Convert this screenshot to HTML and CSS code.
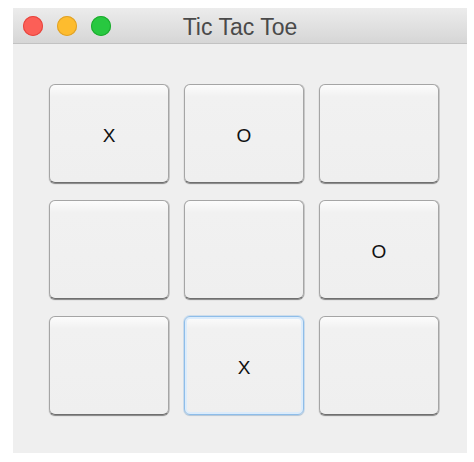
FILE: index.html
```html
<!DOCTYPE html>
<html>
<head>
<meta charset="utf-8">
<link rel="stylesheet" href="styles.css">
</head>
<body>
<div class="window">
  <div class="titlebar">
    <div class="lights">
      <span class="light red"></span>
      <span class="light yellow"></span>
      <span class="light green"></span>
    </div>
    <div class="title">Tic Tac Toe</div>
  </div>
  <div class="content">
    <div class="board">
      <button class="cell">X</button>
      <button class="cell">O</button>
      <button class="cell"></button>
      <button class="cell"></button>
      <button class="cell"></button>
      <button class="cell">O</button>
      <button class="cell"></button>
      <button class="cell focused">X</button>
      <button class="cell"></button>
    </div>
  </div>
</div>
</body>
</html>
```
FILE: styles.css
```css
html, body {
  margin: 0;
  padding: 0;
  background: #ffffff;
}
body {
  padding: 8px 0 0 13px;
  font-family: "Liberation Sans", Arial, sans-serif;
}
.window {
  width: 454px;
  height: 445px;
  background: #efefef;
  display: flex;
  flex-direction: column;
}
.titlebar {
  height: 35px;
  border-bottom: 1px solid #c2c2c2;
  background: linear-gradient(#ececec, #d6d6d6);
  position: relative;
  display: flex;
  align-items: center;
}
.lights {
  display: flex;
  gap: 14px;
  padding-left: 10px;
  padding-top: 1px;
}
.light {
  width: 20px;
  height: 20px;
  border-radius: 50%;
  display: block;
}
.red { background: #fc5f57; box-shadow: inset 0 0 0 1px #e5463f; }
.yellow { background: #fdbc2e; box-shadow: inset 0 0 0 1px #dea12a; }
.green { background: #28c840; box-shadow: inset 0 0 0 1px #1eaa2f; }
.title {
  position: absolute;
  left: 0;
  right: 0;
  top: 0;
  bottom: 0;
  display: flex;
  align-items: center;
  justify-content: center;
  font-size: 23px;
  color: #4a4a4a;
  padding-top: 3px;
}
.content {
  flex: 1;
  padding: 40px 28px 0 36px;
}
.board {
  display: grid;
  grid-template-columns: repeat(3, 120px);
  grid-template-rows: repeat(3, 99px);
  column-gap: 15px;
  row-gap: 17px;
}
.cell {
  margin: 0;
  padding: 4px 0 0 0;
  font-family: "Liberation Sans", Arial, sans-serif;
  font-size: 19px;
  color: #111;
  border: 1px solid #a5a5a5;
  border-bottom-color: #6f6f6f;
  border-radius: 6px;
  background: linear-gradient(#fcfcfc, #f1f1f1 12%, #efefef);
  box-shadow: 0 1px 1px rgba(0, 0, 0, 0.45), 1px 0 0 rgba(0,0,0,0.12);
}
.cell.focused {
  border-color: #8ebde9;
  box-shadow: inset 0 0 0 2px #dcecfb, 0 0 0 1px rgba(142, 189, 233, 0.35), 0 1px 1px rgba(0,0,0,0.15);
}
```
